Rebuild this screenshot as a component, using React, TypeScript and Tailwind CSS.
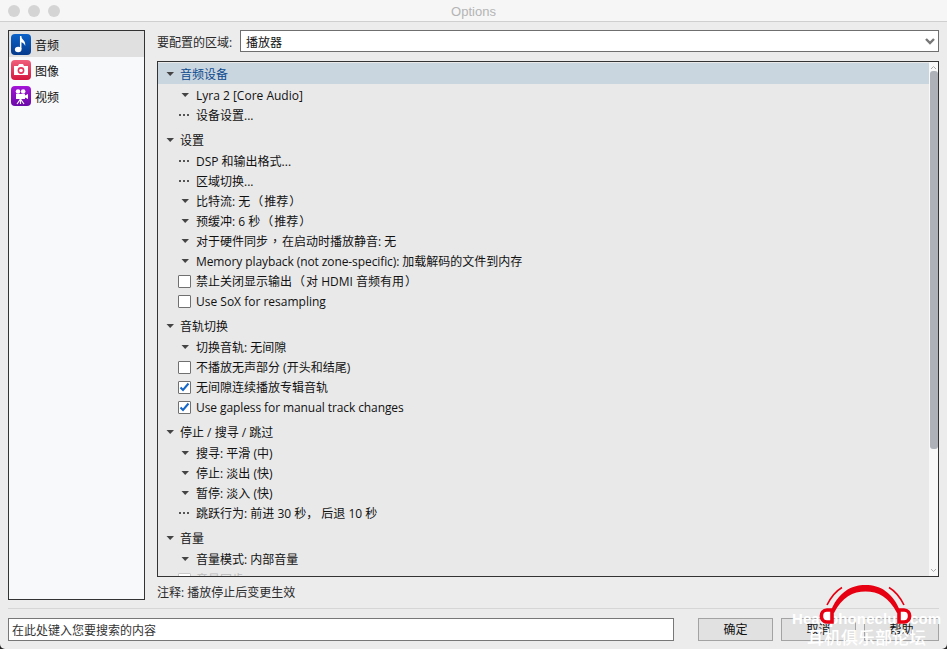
const tri = (
  <svg width="9" height="6" viewBox="0 0 9 6" className="shrink-0"><path d="M0.5 1 H8 L4.2 5 Z" fill="#444" /></svg>
);

function Box({ checked, disabled }: { checked?: boolean; disabled?: boolean }) {
  return (
    <span className={`flex h-[13px] w-[13px] items-center justify-center rounded-[1px] border bg-white ${disabled ? "border-[#c9c9c9]" : "border-[#707070]"}`}>
      {checked && (
        <svg width="11" height="10" viewBox="0 0 11 10"><path d="M1.5 5.5 L4 8 L9.5 1.5" fill="none" stroke="#1466c8" strokeWidth="2" /></svg>
      )}
    </span>
  );
}

function P({ c }: { c: string }) {
  return <span className="px-[1px] font-['Noto_Sans_CJK_TC']">{c}</span>;
}

function Header({ text, active, first }: { text: string; active?: boolean; first?: boolean }) {
  return (
    <div className={`mb-[1px] flex h-[21px] items-center pl-[8px] ${first ? "" : "mt-[4px]"} ${active ? "bg-[#c9d5df] text-[#0c4a8f]" : "text-[#111]"}`}>
      <span className="flex w-[14px] items-center">{tri}</span>
      <span className="pt-[2px]">{text}</span>
    </div>
  );
}

function Row({ kind, children, disabled }: { kind: "tri" | "dots" | "off" | "on" | "dis"; children: React.ReactNode; disabled?: boolean }) {
  return (
    <div className={`flex h-[20px] items-center pl-[20px] ${disabled ? "text-[#bbb]" : "text-[#111]"}`}>
      <span className="flex w-[18px] items-center">
        {kind === "tri" && <span className="ml-[3px] flex">{tri}</span>}
        {kind === "dots" && <span className="ml-[1px] flex gap-[2px]"><i className="h-[2px] w-[2px] bg-[#555]" /><i className="h-[2px] w-[2px] bg-[#555]" /><i className="h-[2px] w-[2px] bg-[#555]" /></span>}
        {kind === "off" && <Box />}
        {kind === "on" && <Box checked />}
        {kind === "dis" && <Box disabled />}
      </span>
      <span className="whitespace-pre pt-[1px]">{children}</span>
    </div>
  );
}

function NoteIcon() {
  return (
    <svg width="20" height="21" viewBox="0 0 20 21">
      <defs><linearGradient id="gb" x1="0" y1="0" x2="0" y2="1"><stop offset="0" stopColor="#0a62c9" /><stop offset="1" stopColor="#053a8c" /></linearGradient></defs>
      <rect width="20" height="21" rx="4" fill="url(#gb)" />
      <path d="M9.7 2 V15" stroke="#fff" strokeWidth="1.5" />
      <path d="M9.7 2 C10.5 5.5 15 6.5 14.2 12 C13.5 9.5 11.5 8.5 9.7 8 Z" fill="#fff" />
      <ellipse cx="7.2" cy="15.5" rx="3.3" ry="2.7" fill="#fff" />
    </svg>
  );
}

function CameraIcon() {
  return (
    <svg width="20" height="20" viewBox="0 0 20 20">
      <defs><linearGradient id="gr" x1="0" y1="0" x2="0" y2="1"><stop offset="0" stopColor="#f0607c" /><stop offset="1" stopColor="#d5173f" /></linearGradient></defs>
      <rect width="20" height="20" rx="4" fill="url(#gr)" />
      <path d="M3 6 H7 L8 4 H12 L13 6 H17 V15 H3 Z" fill="#fff" />
      <circle cx="10" cy="10.5" r="3.4" fill="#e8345a" />
      <circle cx="10" cy="10.5" r="1.8" fill="#fff" />
    </svg>
  );
}

function VideoIcon() {
  return (
    <svg width="20" height="20" viewBox="0 0 20 20">
      <defs><linearGradient id="gp" x1="0" y1="0" x2="0" y2="1"><stop offset="0" stopColor="#a313d8" /><stop offset="1" stopColor="#6a0aa8" /></linearGradient></defs>
      <rect width="20" height="20" rx="4" fill="url(#gp)" />
      <circle cx="7" cy="5.5" r="2.3" fill="#fff" />
      <circle cx="12.2" cy="5.5" r="2.3" fill="#fff" />
      <rect x="5" y="8" width="9" height="5" fill="#fff" />
      <path d="M14 9.5 L17 8 V13 L14 11.5 Z" fill="#fff" />
      <path d="M9.5 13 L6 18 M9.5 13 V18 M9.5 13 L13 18" stroke="#fff" strokeWidth="1.2" />
    </svg>
  );
}

function SideItem({ icon, text, active }: { icon: React.ReactNode; text: string; active?: boolean }) {
  return (
    <div className={`flex h-[26px] items-center gap-[4px] pl-[2px] text-[#111] ${active ? "bg-[#e0e0e0]" : ""}`}>
      {icon}
      <span className="pt-[4px]">{text}</span>
    </div>
  );
}

function Btn({ text, cls }: { text: string; cls: string }) {
  return (
    <div className={`flex h-[23px] items-center justify-center border border-[#a3a3a3] bg-[#e1e1e1] text-[#111] ${cls}`}>{text}</div>
  );
}

export default function App() {
  return (
    <div className="h-[649px] w-[947px] bg-[#222]">
      <div
        className="relative h-[649px] w-[947px] overflow-hidden rounded-b-[5px] bg-[#ececec] text-[12px] leading-none"
        style={{ fontFamily: '"Open Sans", "Noto Sans CJK SC", sans-serif' }}
      >
        <div className="relative flex h-[22px] items-center justify-center border-b border-[#cfcfcf] bg-[#f6f6f6]">
          <div className="absolute left-[8px] top-[5px] flex gap-[8px]">
            <i className="h-[12px] w-[12px] rounded-full bg-[#d4d4d4]" />
            <i className="h-[12px] w-[12px] rounded-full bg-[#d4d4d4]" />
            <i className="h-[12px] w-[12px] rounded-full bg-[#d4d4d4]" />
          </div>
          <span className="pt-[1px] text-[13px] text-[#b4b4b4]" style={{ fontFamily: '"Liberation Sans", sans-serif' }}>Options</span>
        </div>

        <div className="flex h-[578px] gap-[12px] pl-[8px] pr-[8px] pt-[8px]">
          <div className="h-[570px] w-[137px] shrink-0 border border-[#333] bg-[#f8f9fb]">
            <SideItem active icon={<NoteIcon />} text="音频" />
            <SideItem icon={<CameraIcon />} text="图像" />
            <SideItem icon={<VideoIcon />} text="视频" />
          </div>

          <div className="flex min-w-0 flex-1 flex-col">
            <div className="flex h-[22px] items-center">
              <span className="w-[83px] shrink-0 pt-[4px] text-[#2a2a2a]">要配置的区域:</span>
              <div className="flex h-[22px] flex-1 items-center justify-between border border-[#6f6f6f] bg-white pl-[5px] pr-[3px] text-[#111]">
                <span className="pt-[3px]">播放器</span>
                <svg width="10" height="7" viewBox="0 0 10 7"><path d="M1 1 L5 5 L9 1" fill="none" stroke="#777" strokeWidth="2.4" /></svg>
              </div>
            </div>

            <div className="mt-[9px] flex h-[516px] border border-[#333] bg-[#e9e9e9]">
              <div className="min-w-0 flex-1 overflow-hidden pt-[1px]">
                <Header first active text="音频设备" />
                <Row kind="tri">Lyra 2 [Core Audio]</Row>
                <Row kind="dots">设备设置...</Row>
                <Header text="设置" />
                <Row kind="dots">DSP 和输出格式...</Row>
                <Row kind="dots">区域切换...</Row>
                <Row kind="tri">比特流: 无<P c="（" />推荐<P c="）" /></Row>
                <Row kind="tri">预缓冲: 6 秒<P c="（" />推荐<P c="）" /></Row>
                <Row kind="tri">对于硬件同步<P c="，" />在启动时播放静音: 无</Row>
                <Row kind="tri"><span className="tracking-[-0.09px]">Memory playback (not zone-specific): </span>加载解码的文件到内存</Row>
                <Row kind="off">禁止关闭显示输出<P c="（" />对 HDMI 音频有用<P c="）" /></Row>
                <Row kind="off">Use SoX for resampling</Row>
                <Header text="音轨切换" />
                <Row kind="tri">切换音轨: 无间隙</Row>
                <Row kind="off">不播放无声部分 (开头和结尾)</Row>
                <Row kind="on">无间隙连续播放专辑音轨</Row>
                <Row kind="on"><span className="tracking-[-0.09px]">Use gapless for manual track changes</span></Row>
                <Header text="停止 / 搜寻 / 跳过" />
                <Row kind="tri">搜寻: 平滑 (中)</Row>
                <Row kind="tri">停止: 淡出 (快)</Row>
                <Row kind="tri">暂停: 淡入 (快)</Row>
                <Row kind="dots">跳跃行为: 前进 30 秒， 后退 10 秒</Row>
                <Header text="音量" />
                <Row kind="tri">音量模式: 内部音量</Row>
                <Row kind="dis" disabled>音量同步</Row>
              </div>
              <div className="flex w-[9px] shrink-0 flex-col items-center bg-[#f8f8f8]">
                <svg width="7" height="5" viewBox="0 0 7 5" className="mt-[3px]"><path d="M1 4 L3.5 1.5 L6 4" fill="none" stroke="#aaa" /></svg>
                <div className="mt-[1px] h-[378px] w-[8px] rounded-[3px] bg-[#aeb1b8]" />
                <div className="flex-1" />
                <svg width="7" height="5" viewBox="0 0 7 5" className="mb-[3px]"><path d="M1 1 L3.5 3.5 L6 1" fill="none" stroke="#aaa" /></svg>
              </div>
            </div>

            <div className="flex h-[31px] items-center pt-[9px] text-[#2a2a2a]">注释: 播放停止后变更生效</div>
          </div>
        </div>

        <div className="mx-[8px] mt-[8px] h-[1px] bg-[#d6d6d6]" />

        <div className="flex items-center pl-[8px] pr-[8px] pt-[9px]">
          <div className="flex h-[23px] w-[666px] items-center border border-[#777] bg-white pl-[3px] pt-[2px] text-[#333]">在此处键入您要搜索的内容</div>
          <Btn text="确定" cls="ml-[24px] w-[75px]" />
          <Btn text="取消" cls="ml-[8px] w-[75px]" />
          <Btn text="帮助" cls="ml-[8px] w-[75px]" />
        </div>

        <div className="absolute left-[790px] top-[582px] h-[67px] w-[157px]">
          <div className="absolute left-[2px] top-[29px] whitespace-nowrap text-[15px] font-bold text-white" style={{ fontFamily: '"Liberation Sans", sans-serif', letterSpacing: "0.1px" }}>Headphoneclub.com</div>
          <div className="absolute left-[17px] top-[46px] whitespace-nowrap text-[17px] font-medium text-white" style={{ fontFamily: '"Noto Sans CJK SC", sans-serif' }}>耳机俱乐部论坛</div>
          <svg width="157" height="67" viewBox="0 0 157 67" className="absolute left-0 top-0">
            <path d="M40 31 C48 10 61 3 75.5 3 C90 3 103 10 111 31 L107 31 C99 15 88 9.5 75.5 9.5 C63 9.5 52 15 44 31 Z" fill="#e60012" />
            <path d="M37 23 C41 15 46 9 52 5.5" fill="none" stroke="#e60012" strokeWidth="1.6" />
            <path d="M114 23 C110 15 105 9 99 5.5" fill="none" stroke="#e60012" strokeWidth="1.6" />
            <path d="M42 28 H37 C29.5 28 29.5 40 37 40 H42 Z" fill="#fff" stroke="#e60012" strokeWidth="3.6" />
            <path d="M109 28 H114 C121.5 28 121.5 40 114 40 H109 Z" fill="#fff" stroke="#e60012" strokeWidth="3.6" />
          </svg>
        </div>
      </div>
    </div>
  );
}
